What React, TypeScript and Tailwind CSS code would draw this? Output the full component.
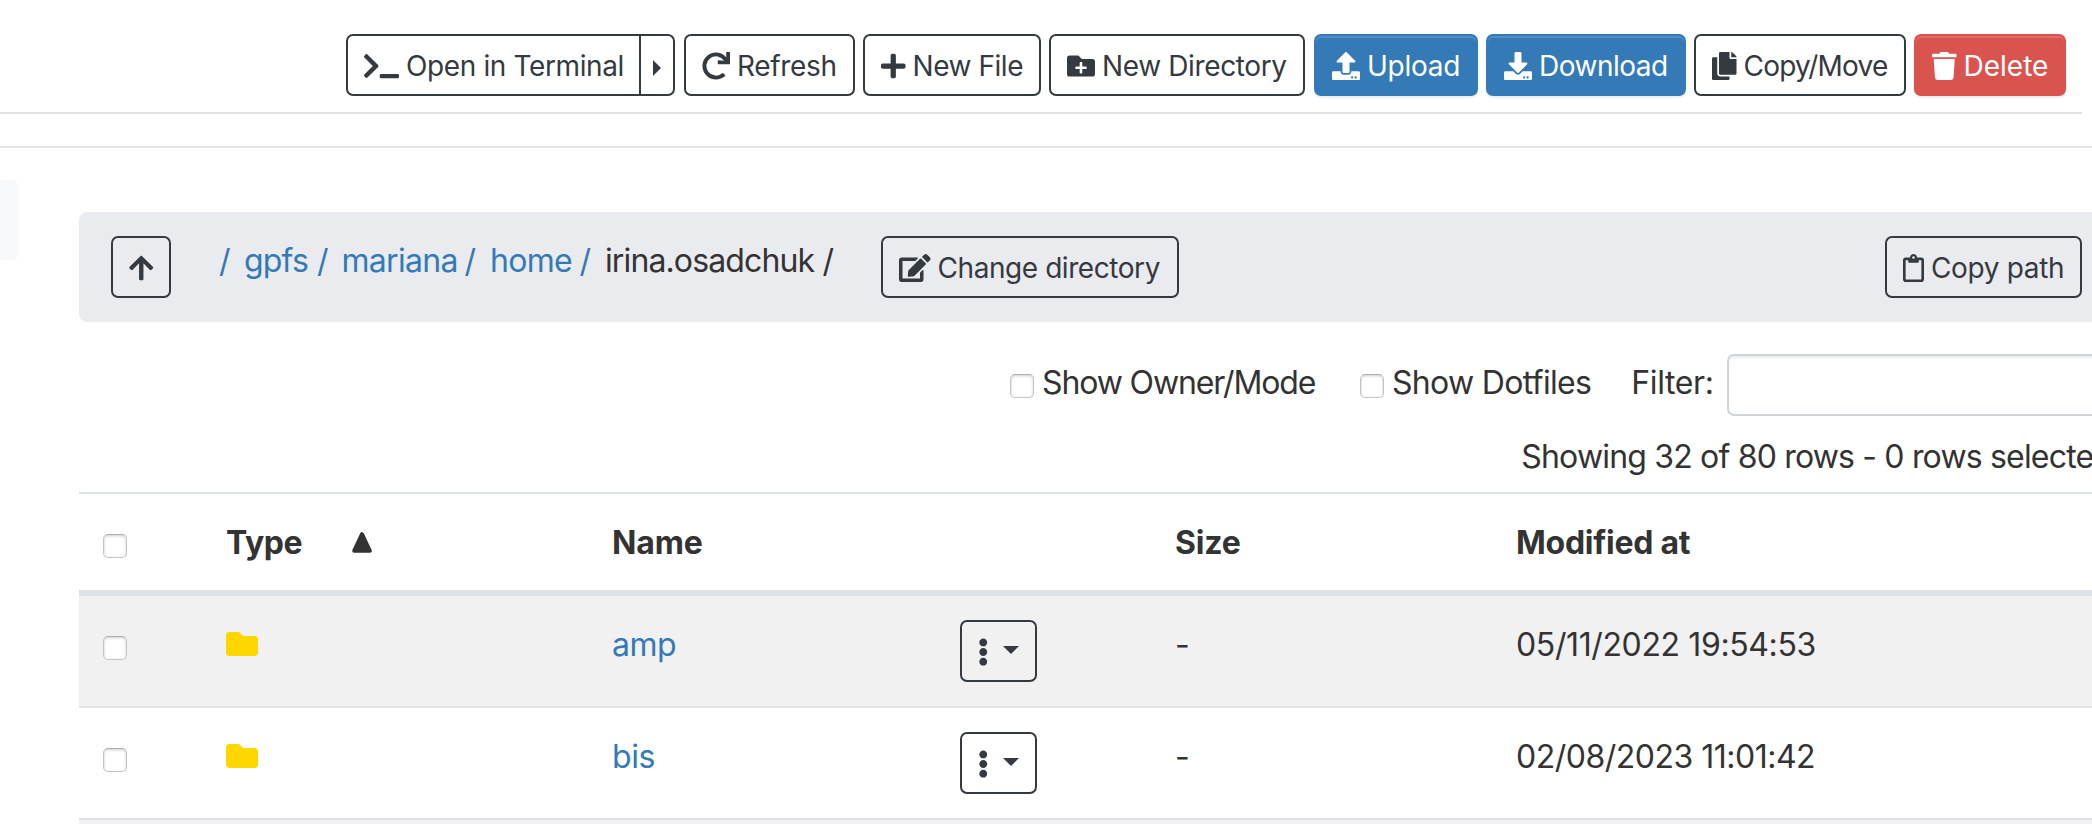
import type { ReactNode } from "react";
import {
  FaArrowUp,
  FaCopy,
  FaDownload,
  FaEdit,
  FaEllipsisV,
  FaFolder,
  FaFolderPlus,
  FaPlus,
  FaRedo,
  FaRegClipboard,
  FaTerminal,
  FaTrash,
  FaUpload,
} from "react-icons/fa";

const outline = "border-[#343a40] text-[#343a40]";
const solid =
  "text-white shadow-[inset_0_2px_0_rgba(255,255,255,0.15),0_2px_2px_rgba(0,0,0,0.075)]";
const primary = `border-[#337ab7] bg-[#337ab7] ${solid}`;
const danger = `border-[#d9534f] bg-[#d9534f] ${solid}`;

function Button({
  icon,
  label,
  tone = outline,
  className = "",
}: {
  icon: ReactNode;
  label?: string;
  tone?: string;
  className?: string;
}) {
  return (
    <button
      className={`flex h-[62px] shrink-0 items-center gap-[7px] rounded-[7px] border-2 pt-[2px] pl-4 text-[28px] leading-[42px] whitespace-nowrap ${tone} ${className}`}
    >
      {icon}
      {label && <span>{label}</span>}
    </button>
  );
}

function Toolbar() {
  return (
    <header className="mr-[10px] flex h-[114px] gap-2 border-b-2 border-[#dee2e6] pt-[34px] pl-[346px]">
      <div className="flex">
        <Button
          icon={<FaTerminal className="h-7 w-[35px] shrink-0" />}
          label="Open in Terminal"
          className="w-[295px] rounded-r-none tracking-[-0.38px]"
        />
        <button className="-ml-[2px] flex h-[62px] w-9 items-center rounded-r-[7px] border-2 border-[#343a40] pt-[5px] pl-3 text-[#343a40]">
          <svg viewBox="0 0 8 16" className="h-4 w-2 fill-current">
            <path d="M0 0 8 8 0 16Z" />
          </svg>
        </button>
      </div>
      <Button
        icon={<FaRedo className="size-7 shrink-0" />}
        label="Refresh"
        className="ml-px w-[171px] tracking-[-0.33px]"
      />
      <Button
        icon={<FaPlus className="h-7 w-[24.5px] shrink-0" />}
        label="New File"
        className="w-[178px] tracking-[-0.45px]"
      />
      <Button
        icon={<FaFolderPlus className="size-7 shrink-0" />}
        label="New Directory"
        className="w-[256px] tracking-[-0.37px]"
      />
      <Button
        icon={<FaUpload className="size-7 shrink-0" />}
        label="Upload"
        tone={primary}
        className="ml-px w-[164px] tracking-[-0.25px]"
      />
      <Button
        icon={<FaDownload className="size-7 shrink-0" />}
        label="Download"
        tone={primary}
        className="w-[200px] tracking-[-0.5px]"
      />
      <Button
        icon={<FaCopy className="h-7 w-[24.5px] shrink-0" />}
        label="Copy/Move"
        className="w-[212px] tracking-[-0.8px]"
      />
      <Button
        icon={<FaTrash className="h-7 w-[24.5px] shrink-0" />}
        label="Delete"
        tone={danger}
        className="w-[152px]"
      />
    </header>
  );
}

const crumbs = [
  { name: "gpfs", width: "w-[73px] tracking-[-0.8px]", slash: "w-[24.5px]" },
  { name: "mariana", width: "w-[123px] tracking-[-0.7px]", slash: "w-[25.5px]" },
  { name: "home", width: "w-[89.5px] tracking-[-0.7px]", slash: "w-[25.5px]" },
];

function PathBar() {
  return (
    <div className="flex h-[110px] rounded-l-[8px] bg-[#eaebef] pt-6 pr-[10px] pl-8">
      <Button
        icon={<FaArrowUp className="h-7 w-[24.5px] shrink-0" />}
        className="w-[60px]"
      />
      <nav className="ml-12 flex h-12 w-[662px] text-[#337ab7]">
        <a className="w-[25px]">/</a>
        {crumbs.map((c) => (
          <a key={c.name} className="flex">
            <span className={c.width}>{c.name}</span>
            <span className={c.slash}>/</span>
          </a>
        ))}
        <span className="w-[217.5px] tracking-[-0.88px] text-[#333]">
          irina.osadchuk
        </span>
        <span className="text-[#333]">/</span>
      </nav>
      <Button
        icon={<FaEdit className="h-7 w-[31.5px] shrink-0" />}
        label="Change directory"
        className="w-[298px] tracking-[-0.43px]"
      />
      <Button
        icon={<FaRegClipboard className="h-7 w-[21px] shrink-0" />}
        label="Copy path"
        className="ml-auto w-[197px] tracking-[-0.34px]"
      />
    </div>
  );
}

function Checkbox({ className = "" }: { className?: string }) {
  return (
    <span
      role="checkbox"
      aria-checked="false"
      className={`block size-6 shrink-0 rounded-[5px] border border-[#c4c4c4] border-t-[#b0b0b0] bg-white shadow-[inset_0_1px_3px_rgba(0,0,0,0.2)] ${className}`}
    />
  );
}

function Filters() {
  return (
    <div className="mt-8 flex h-[62px] pl-[931px]">
      <label className="flex w-[350px] shrink-0 gap-[8px]">
        <Checkbox className="mt-5" />
        <span className="mt-1 tracking-[-1.14px]">Show Owner/Mode</span>
      </label>
      <label className="flex w-[271.3px] shrink-0 gap-[8px]">
        <Checkbox className="mt-5" />
        <span className="mt-1 tracking-[-0.68px]">Show Dotfiles</span>
      </label>
      <span className="mt-1 w-[95.7px] shrink-0 tracking-[-0.37px]">Filter:</span>
      <input className="w-[420px] shrink-0 rounded-[7px] border-2 border-[#ced4da] bg-white shadow-[inset_0_2px_2px_rgba(0,0,0,0.075)]" />
    </div>
  );
}

const columns = "grid grid-cols-[147px_386px_348px_215px_341px_1fr]";

const rows = [
  {
    name: "amp",
    nameClass: "tracking-[-0.5px]",
    modified: "05/11/2022 19:54:53",
    modifiedClass: "tracking-[-0.38px]",
    bg: "bg-[#f1f1f1]",
  },
  {
    name: "bis",
    nameClass: "tracking-[-0.42px]",
    modified: "02/08/2023 11:01:42",
    modifiedClass: "tracking-[-0.5px]",
    bg: "bg-white",
  },
];

function FileTable() {
  return (
    <div className="mt-[10px] border-t-2 border-[#dee2e6]">
      <div
        className={`${columns} h-[102px] border-b-[6px] border-[#dee2e6] pt-6 font-bold`}
      >
        <Checkbox className="mt-4 ml-6" />
        <div className="flex">
          <span className="tracking-[-0.43px]">Type</span>
          <svg viewBox="0 0 20 21" className="mt-[14px] ml-[50px] h-[21px] w-5">
            <path
              d="M10 2.2 17.8 18.8H2.2Z"
              fill="#333"
              stroke="#333"
              strokeWidth="4"
              strokeLinejoin="round"
            />
          </svg>
        </div>
        <span className="tracking-[-0.1px]">Name</span>
        <span />
        <span className="tracking-[-0.2px]">Size</span>
        <span className="tracking-[-0.25px]">Modified at</span>
      </div>
      {rows.map((r) => (
        <div
          key={r.name}
          className={`${columns} h-28 border-b-2 border-[#dee2e6] pt-6 ${r.bg}`}
        >
          <Checkbox className="mt-4 ml-6" />
          <FaFolder className="mt-2 h-8 w-8" color="#ffd700" />
          <a className={`text-[#337ab7] ${r.nameClass}`}>{r.name}</a>
          <button className="flex h-[62px] w-[77px] items-center rounded-[7px] border-2 border-[#343a40] pt-px pl-4 text-[#343a40]">
            <FaEllipsisV className="h-7 w-[10.5px] shrink-0" />
            <svg
              viewBox="0 0 16 8"
              className="-mt-[3px] ml-[14.5px] h-2 w-4 shrink-0 fill-current"
            >
              <path d="M0 0H16L8 8Z" />
            </svg>
          </button>
          <span>-</span>
          <span className={r.modifiedClass}>{r.modified}</span>
        </div>
      ))}
      <div className="h-[110px] bg-[#f1f1f1]" />
    </div>
  );
}

export default function App() {
  return (
    <div className="h-[824px] w-[2092px] overflow-hidden bg-white font-['Inter',sans-serif] text-[32px] leading-[50px] whitespace-nowrap text-[#333]">
      <Toolbar />
      <div className="mt-8 flex border-t-2 border-[#e5e5e5]">
        <aside className="mt-8 h-20 w-[19px] shrink-0 rounded-r-[8px] bg-[#f8f9fb]" />
        <main className="ml-[60px] w-[2013px] shrink-0 pt-16">
          <PathBar />
          <Filters />
          <p className="mt-4 pl-[1442.3px] tracking-[-0.82px]">
            Showing 32 of 80 rows - 0 rows selected
          </p>
          <FileTable />
        </main>
      </div>
    </div>
  );
}
